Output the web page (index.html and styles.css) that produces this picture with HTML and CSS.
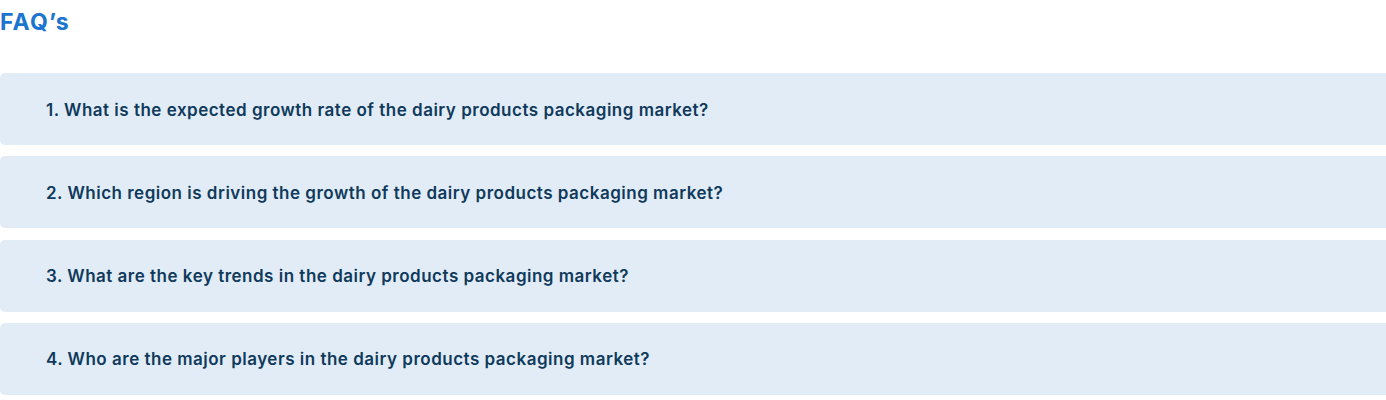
FILE: index.html
```html
<!DOCTYPE html>
<html>
<head>
<meta charset="utf-8">
<link rel="stylesheet" href="styles.css">
</head>
<body>
<section class="faq">
  <h2 class="faq-title">FAQ’s</h2>
  <div class="faq-list">
    <div class="faq-item">1. What is the expected growth rate of the dairy products packaging market?</div>
    <div class="faq-item">2. Which region is driving the growth of the dairy products packaging market?</div>
    <div class="faq-item">3. What are the key trends in the dairy products packaging market?</div>
    <div class="faq-item">4. Who are the major players in the dairy products packaging market?</div>
  </div>
</section>
</body>
</html>
```
FILE: styles.css
```css
html, body { margin: 0; padding: 0; background: #fff; }
body { font-family: "Inter", "Noto Sans", sans-serif; }
.faq { width: 1400px; }
.faq-title {
  margin: 0;
  padding-top: 8px;
  height: 73px;
  box-sizing: border-box;
  font-size: 23px;
  line-height: 28px;
  font-weight: 700;
  letter-spacing: 1.2px;
  color: #1b75cf;
}
.faq-list { display: flex; flex-direction: column; gap: 11.3px; }
.faq-item {
  background: #e2ecf6;
  border-radius: 5px;
  height: 72px;
  box-sizing: border-box;
  display: flex;
  align-items: center;
  padding-left: 46px;
  padding-top: 1px;
  font-size: 17px;
  font-weight: 600;
  letter-spacing: 0.5px;
  color: #0f3a5c;
}
```
